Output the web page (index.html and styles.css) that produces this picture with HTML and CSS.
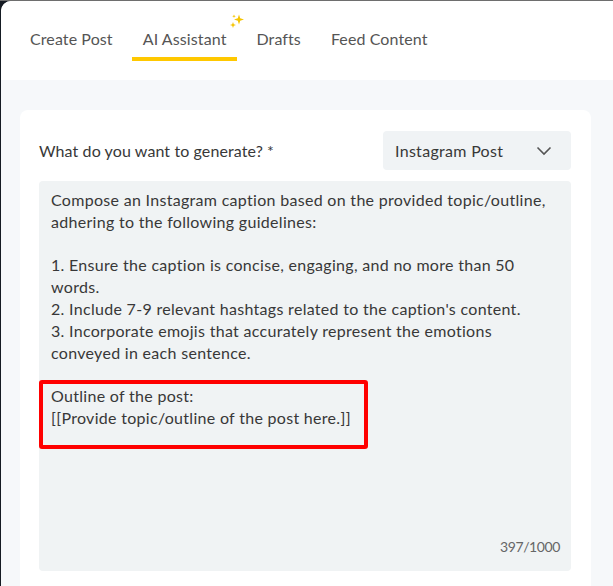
FILE: index.html
```html
<!DOCTYPE html>
<html>
<head>
<meta charset="utf-8">
<link rel="stylesheet" href="styles.css">
</head>
<body>
<div class="screen">
  <div class="app">
    <nav class="tabs">
      <div class="tab">Create Post</div>
      <div class="tab active">AI Assistant
        <svg class="sparkle" width="16" height="16" viewBox="0 0 16 16">
          <path d="M10 1.5 L11.2 5.3 L15 6.5 L11.2 7.7 L10 11.5 L8.8 7.7 L5 6.5 L8.8 5.3 Z" fill="#f5c400"/>
          <path d="M4 9 L4.8 11.2 L7 12 L4.8 12.8 L4 15 L3.2 12.8 L1 12 L3.2 11.2 Z" fill="#f5c400"/>
          <path d="M5 1.5 L5.5 2.8 L6.8 3.3 L5.5 3.8 L5 5.1 L4.5 3.8 L3.2 3.3 L4.5 2.8 Z" fill="#f5c400"/>
        </svg>
      </div>
      <div class="tab">Drafts</div>
      <div class="tab">Feed Content</div>
    </nav>
    <main class="content">
      <section class="card">
        <div class="row">
          <label class="label">What do you want to generate? *</label>
          <div class="select">
            <span>Instagram Post</span>
            <svg width="16" height="10" viewBox="0 0 16 10"><path d="M1.5 1.5 L8 8 L14.5 1.5" fill="none" stroke="#555" stroke-width="1.6"/></svg>
          </div>
        </div>
        <div class="textarea">
          <div class="text">
            <p>Compose an Instagram caption based on the provided topic/outline, adhering to the following guidelines:</p>
            <p class="blank">&nbsp;</p>
            <p>1. Ensure the caption is concise, engaging, and no more than 50 words.</p>
            <p>2. Include 7-9 relevant hashtags related to the caption's content.</p>
            <p>3. Incorporate emojis that accurately represent the emotions conveyed in each sentence.</p>
            <p class="blank">&nbsp;</p>
            <p>Outline of the post:</p>
            <p>[[Provide topic/outline of the post here.]]</p>
          </div>
          <div class="highlight"></div>
          <div class="count">397/1000</div>
        </div>
      </section>
    </main>
  </div>
</div>
</body>
</html>
```
FILE: styles.css
```css
html, body {
  margin: 0;
  padding: 0;
  height: 100%;
  overflow: hidden;
}
body {
  background: #151b23;
  font-family: "Lato", "Liberation Sans", sans-serif;
  letter-spacing: 0.3px;
}
.screen {
  height: 100%;
  border-top: 1px solid #6e6e6e;
  box-sizing: border-box;
  padding-left: 1px;
}
.app {
  height: 100%;
  background: #f6f8fa;
  border-top-left-radius: 10px;
  overflow: hidden;
  display: flex;
  flex-direction: column;
}
.tabs {
  height: 79px;
  flex: none;
  background: #fff;
  display: flex;
  align-items: flex-start;
  padding-left: 18px;
  gap: 8px;
}
.tab {
  position: relative;
  margin-top: 26px;
  padding: 0 11px;
  height: 34px;
  box-sizing: border-box;
  font-size: 16px;
  line-height: 24px;
  letter-spacing: 0.1px;
  color: #555;
  border-bottom: 4px solid transparent;
}
.tab.active {
  border-bottom-color: #ffc800;
  padding-bottom: 6px;
  height: 34px;
}
.sparkle {
  position: absolute;
  right: -8px;
  top: -14px;
}
.content {
  flex: 1;
  padding: 30px 22px 0 19px;
}
.card {
  background: #fff;
  border-radius: 8px 8px 0 0;
  height: 100%;
  padding: 21px 20px 0 19px;
  box-sizing: border-box;
}
.row {
  display: flex;
  justify-content: space-between;
  align-items: center;
  height: 39px;
}
.label {
  font-size: 16px;
  letter-spacing: 0.1px;
  color: #383838;
}
.select {
  width: 188px;
  height: 39px;
  box-sizing: border-box;
  background: #f0f3f5;
  border-radius: 4px;
  display: flex;
  align-items: center;
  justify-content: space-between;
  padding: 0 19px 0 12px;
  font-size: 16px;
  color: #383838;
}
.textarea {
  position: relative;
  margin-top: 11px;
  height: 390px;
  background: #f0f3f4;
  border-radius: 4px;
  padding: 8px 14px 0 12px;
  box-sizing: border-box;
}
.text p {
  margin: 0;
  font-size: 16px;
  line-height: 21.8px;
  color: #383838;
}
.highlight {
  position: absolute;
  left: 0;
  top: 199px;
  width: 329px;
  height: 69px;
  border: 4px solid #ff0000;
  border-radius: 3px;
  box-sizing: border-box;
}
.count {
  position: absolute;
  right: 11px;
  bottom: 16px;
  font-size: 14px;
  letter-spacing: -0.4px;
  color: #666;
}
```
